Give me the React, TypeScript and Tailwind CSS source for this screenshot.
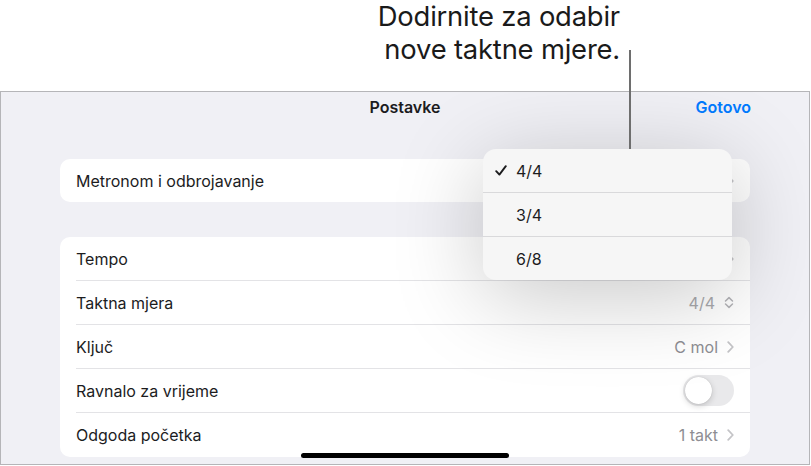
import React from "react";

const Chevron = () => (
  <svg width="7" height="12" viewBox="0 0 7 12" fill="none">
    <path d="M1.2 1.2L5.8 6L1.2 10.8" stroke="#c4c4c7" strokeWidth="1.8" strokeLinecap="round" strokeLinejoin="round" />
  </svg>
);

const UpDown = () => (
  <svg width="10" height="13" viewBox="0 0 10 13" fill="none">
    <path d="M1.5 5L5 1.6L8.5 5M1.5 8L5 11.4L8.5 8" stroke="#b4b4b8" strokeWidth="1.5" strokeLinecap="round" strokeLinejoin="round" />
  </svg>
);

const Check = () => (
  <svg width="12" height="11" viewBox="0 0 12 11" fill="none">
    <path d="M1.2 6.2L4.4 9.6L10.8 1.2" stroke="#1c1c1e" strokeWidth="1.9" strokeLinecap="round" strokeLinejoin="round" />
  </svg>
);

function Row({ label, children, last }: { label: string; children?: React.ReactNode; last?: boolean }) {
  return (
    <div className="pl-4 h-[44px]">
      <div className={"h-full flex items-center justify-between pr-4 " + (last ? "" : "border-b border-[#e3e3e6]")}>
        <span className="text-[16px] text-[#1c1c1e]">{label}</span>
        <div className="flex items-center gap-[9px]">{children}</div>
      </div>
    </div>
  );
}

export default function App() {
  return (
    <div className="relative w-[811px] h-[466px] bg-white overflow-hidden" style={{ fontFamily: "Inter, 'Liberation Sans', sans-serif" }}>
      {/* callout */}
      <div className="h-[91px] pr-[191px] text-right text-[27.4px] leading-[33px] text-[#1a1a1a] tracking-[-0.2px]">
        <div>Dodirnite za odabir</div>
        <div>nove taktne mjere.</div>
      </div>

      {/* frame */}
      <div className="w-[810px] h-[374px] border border-[#b5b5b8] bg-[#f0f0f5] overflow-hidden relative">
        <div className="grid grid-cols-[1fr_auto_1fr] items-center h-[29px]">
          <div />
          <div className="text-[16px] font-semibold text-[#1c1c1e]">Postavke</div>
          <div className="flex justify-end pr-[58px] text-[16px] font-semibold text-[#007aff]">Gotovo</div>
        </div>

        <div className="ml-[59px] mr-[59px] mt-[38px] h-[43px] rounded-[10px] bg-white flex items-center justify-between px-4">
          <span className="text-[16px] text-[#1c1c1e]">Metronom i odbrojavanje</span>
          <Chevron />
        </div>

        <div className="ml-[59px] mr-[59px] mt-[35px] rounded-[10px] bg-white overflow-hidden">
          <Row label="Tempo">
            <span className="text-[16px] text-[#8e8e93]">120</span>
            <Chevron />
          </Row>
          <Row label="Taktna mjera">
            <span className="text-[16px] text-[#a9a9ad]">4/4</span>
            <UpDown />
          </Row>
          <Row label="Ključ">
            <span className="text-[16px] text-[#8e8e93]">C mol</span>
            <Chevron />
          </Row>
          <Row label="Ravnalo za vrijeme">
            <div className="w-[51px] h-[31px] rounded-full bg-[#e9e9eb] p-[2px] flex items-center">
              <div className="w-[27px] h-[27px] rounded-full bg-white shadow-[0_2px_6px_rgba(0,0,0,0.18),0_0_1px_rgba(0,0,0,0.2)]" />
            </div>
          </Row>
          <Row label="Odgoda početka" last>
            <span className="text-[16px] text-[#8e8e93]">1 takt</span>
            <Chevron />
          </Row>
        </div>

        {/* popover */}
        <div className="absolute left-[482px] top-[57px] w-[249px] rounded-[13px] bg-[#f6f6f6] shadow-[0_16px_90px_rgba(0,0,0,0.22)] overflow-hidden">
          <div className="h-[44px] flex items-center border-b border-[#d9d9db]">
            <div className="w-[33px] flex justify-end pr-[9px]"><Check /></div>
            <span className="text-[16px] text-[#1c1c1e]">4/4</span>
          </div>
          <div className="h-[44px] flex items-center border-b border-[#d9d9db]">
            <div className="w-[33px]" />
            <span className="text-[16px] text-[#1c1c1e]">3/4</span>
          </div>
          <div className="h-[43px] flex items-center">
            <div className="w-[33px]" />
            <span className="text-[16px] text-[#1c1c1e]">6/8</span>
          </div>
        </div>

        {/* home indicator */}
        <div className="absolute left-[300px] top-[361px] w-[208px] h-[5px] rounded-full bg-black" />
      </div>

      {/* callout line */}
      <div className="absolute left-[629px] top-[50px] w-[2px] h-[99px] bg-[#6e6e6e]" />
    </div>
  );
}
